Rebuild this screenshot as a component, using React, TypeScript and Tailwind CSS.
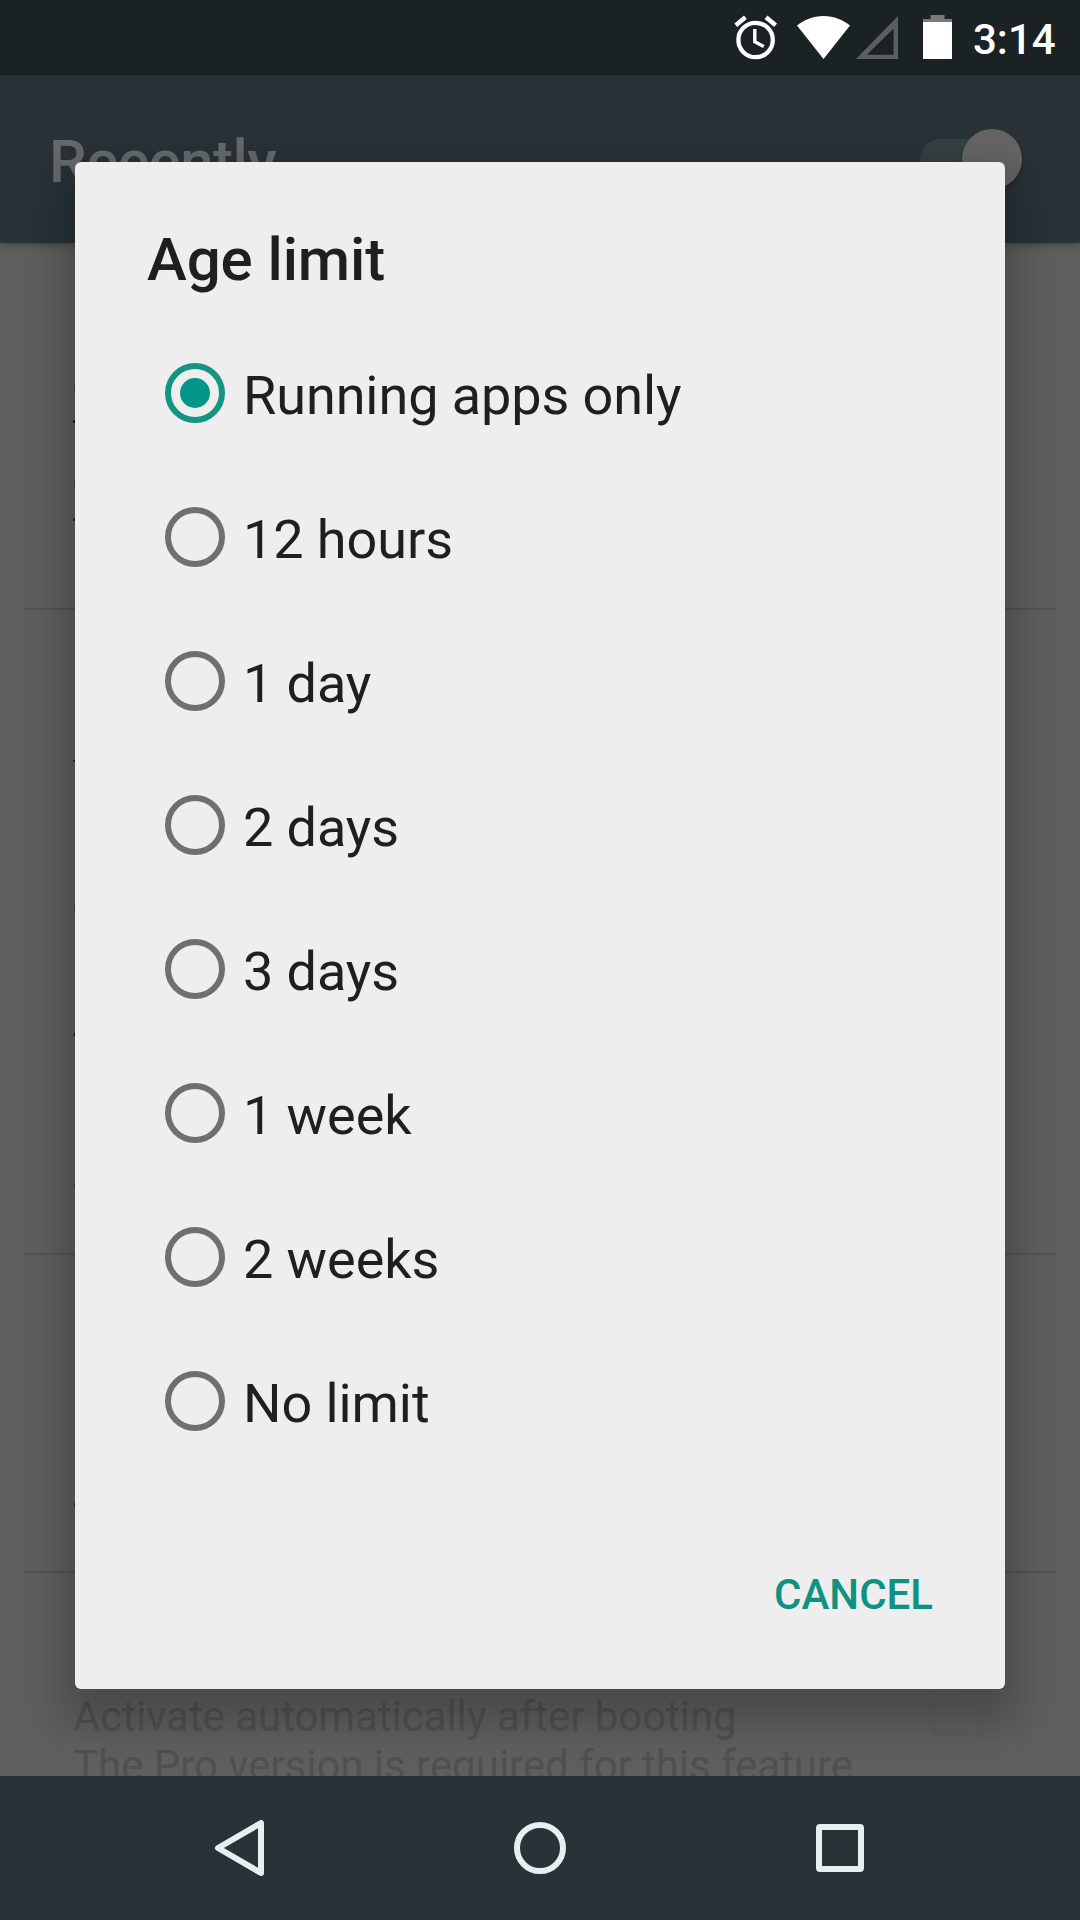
import React from "react";
import clsx from "clsx";

type AgeOption = {
  id: string;
  label: string;
};

const AGE_OPTIONS: AgeOption[] = [
  { id: "running", label: "Running apps only" },
  { id: "12h", label: "12 hours" },
  { id: "1d", label: "1 day" },
  { id: "2d", label: "2 days" },
  { id: "3d", label: "3 days" },
  { id: "1w", label: "1 week" },
  { id: "2w", label: "2 weeks" },
  { id: "none", label: "No limit" },
];

const StatusBar: React.FC = () => (
  <div className="flex h-[75px] items-start justify-end bg-[#1b2224] pr-6 pt-[15px]">
    {/* alarm */}
    <svg className="mr-5 h-[45px] w-[43px]" viewBox="734 15 43 45" fill="none" stroke="#fff">
      <circle cx="755.6" cy="40" r="17.2" strokeWidth="4.3" />
      <path d="M754.8 29v12.8l9 4.8" strokeWidth="3.4" />
      <path d="M735.8 25.3l9.6-8M766 17.3l9.6 8" strokeWidth="4.4" />
    </svg>
    {/* wifi */}
    <svg className="mr-1.5 h-[45px] w-[53px]" viewBox="797 15 53 45" fill="#fff">
      <path d="M823.5 59L797 25.5C804 20 813 16 823.5 16S843 20 850 25.5z" />
    </svg>
    {/* no signal */}
    <svg className="mr-[25px] h-[45px] w-[42px]" viewBox="856 15 42 45" fill="#5b5f61">
      <path fillRule="evenodd" d="M856 59h42V16zM866.8 54.8h26.8V28.5z" />
    </svg>
    {/* battery */}
    <svg className="mr-[21px] h-[45px] w-[29px]" viewBox="923 15 29 45">
      <path d="M930.5 15h14v4h7.5v3h-29v-3h7.5z" fill="#777b7c" />
      <path d="M923 22h29v37h-29z" fill="#fff" />
    </svg>
    <span className="w-[83px] whitespace-nowrap text-[42px] font-medium leading-[49px] text-white">
      3:14
    </span>
  </div>
);

const AppBar: React.FC = () => (
  <div className="relative flex h-[168px] shrink-0 items-center justify-between bg-[#283237] pl-[49px] pr-[58px] shadow-[0_2px_8px_rgba(0,0,0,0.3)]">
    <span className="pt-1.5 text-[60px] font-medium leading-[70px] tracking-[-0.55px] text-[#666a6c]">
      Recently
    </span>
    <div className="flex h-[60px] w-[102px] items-center">
      <div className="h-[41px] w-[80px] rounded-full bg-[#354042]" />
      <div className="-ml-[38px] size-[60px] shrink-0 rounded-full bg-[#666565] shadow-[0_3px_5px_rgba(0,0,0,0.2)]" />
    </div>
  </div>
);

// Settings list that stays dimmed behind the dialog
const SettingsList: React.FC = () => (
  <div className="flex flex-1 flex-col overflow-hidden bg-[#5f5f5f]">
    <div className="mx-6 h-[367px] shrink-0 border-b-2 border-[#535353]" />
    <div className="mx-6 h-[645px] shrink-0 border-b-2 border-[#535353]" />
    <div className="mx-6 h-[318px] shrink-0 border-b-2 border-[#535353]" />
    <div className="flex shrink-0 justify-between pl-[73px] pr-[95px] pt-[119px] text-[42px] leading-[49px] tracking-[-0.05px] text-[#505050]">
      <p className="whitespace-nowrap">
        Activate automatically after booting
        <br />
        The Pro version is required for this feature
      </p>
      <div className="mt-[-10px] size-[54px] rounded-sm border-[5px] border-[#5d5d5d]" />
    </div>
  </div>
);

// Edges of the list labels that peek out beside the dialog
const LabelEdges: React.FC = () => (
  <svg className="absolute left-[72px] top-0 h-[1776px] w-[3px]" viewBox="0 0 3 1776" fill="#242424">
    <path
      d="M2 384h1v8h-1zM2 481h1v7h-1zM2 904h1v8h-1zM2 1184h1v5h-1z"
      opacity="0.5"
    />
    <path d="M1 420h2v3h-2zM1 518h2v3h-2zM1 760h2v2h-2zM3 1031v5h-2zM2 1503h1v4h-1z" />
  </svg>
);

const RadioMark: React.FC<{ checked: boolean }> = ({ checked }) => (
  <span
    className={clsx(
      "flex size-[60px] items-center justify-center rounded-full border-[6px]",
      checked ? "border-[#149482]" : "border-[#6f6f6f]"
    )}
  >
    {checked && <span className="size-[30px] rounded-full bg-[#009688]" />}
  </span>
);

const AgeLimitDialog: React.FC = () => {
  const [selected, setSelected] = React.useState("running");

  return (
    <div
      role="dialog"
      className="absolute left-[75px] top-[162px] flex h-[1527px] w-[930px] flex-col rounded-[6px] bg-[#eeeeee] shadow-[0_20px_40px_15px_rgba(0,0,0,0.22)]"
    >
      <h2 className="pl-[72px] pt-[63px] text-[60px] font-medium leading-[70px] tracking-[-0.1px] text-[#1f1f1f]">
        Age limit
      </h2>

      <div className="mt-[26px] flex flex-col">
        {AGE_OPTIONS.map((option) => (
          <button
            key={option.id}
            type="button"
            className="flex h-36 items-center pl-[90px] text-left"
            onClick={() => setSelected(option.id)}
          >
            <RadioMark checked={selected === option.id} />
            <span className="ml-[18px] pt-1 text-[54px] leading-[63px] tracking-[-0.08px] text-[#1f1f1f]">
              {option.label}
            </span>
          </button>
        ))}
      </div>

      <div className="mt-auto flex justify-end pb-[70px] pr-[72px]">
        <button type="button" className="text-[42px] font-medium leading-[49px] text-[#0f9281]">
          CANCEL
        </button>
      </div>
    </div>
  );
};

const NavigationBar: React.FC = () => (
  <div className="flex h-36 items-center justify-center gap-[240px] bg-[#283237]">
    <svg className="size-[60px]" viewBox="0 0 60 60" fill="none" stroke="#e9eef0" strokeWidth="6" strokeLinejoin="round">
      <path d="M51 5v50L8 30z" />
    </svg>
    <svg className="size-[60px]" viewBox="0 0 60 60" fill="none" stroke="#e9eef0" strokeWidth="6">
      <circle cx="30" cy="30" r="23" />
    </svg>
    <svg className="size-[60px]" viewBox="0 0 60 60" fill="none" stroke="#e9eef0" strokeWidth="6" strokeLinejoin="round">
      <rect x="9" y="9" width="42" height="42" rx="1" />
    </svg>
  </div>
);

export default function App() {
  return (
    <div className="relative flex h-[1920px] w-[1080px] flex-col overflow-hidden font-[Roboto,sans-serif]">
      <div className="relative flex h-[1776px] flex-col overflow-hidden">
        <StatusBar />
        <AppBar />
        <SettingsList />
        <LabelEdges />
        <AgeLimitDialog />
      </div>
      <NavigationBar />
    </div>
  );
}
